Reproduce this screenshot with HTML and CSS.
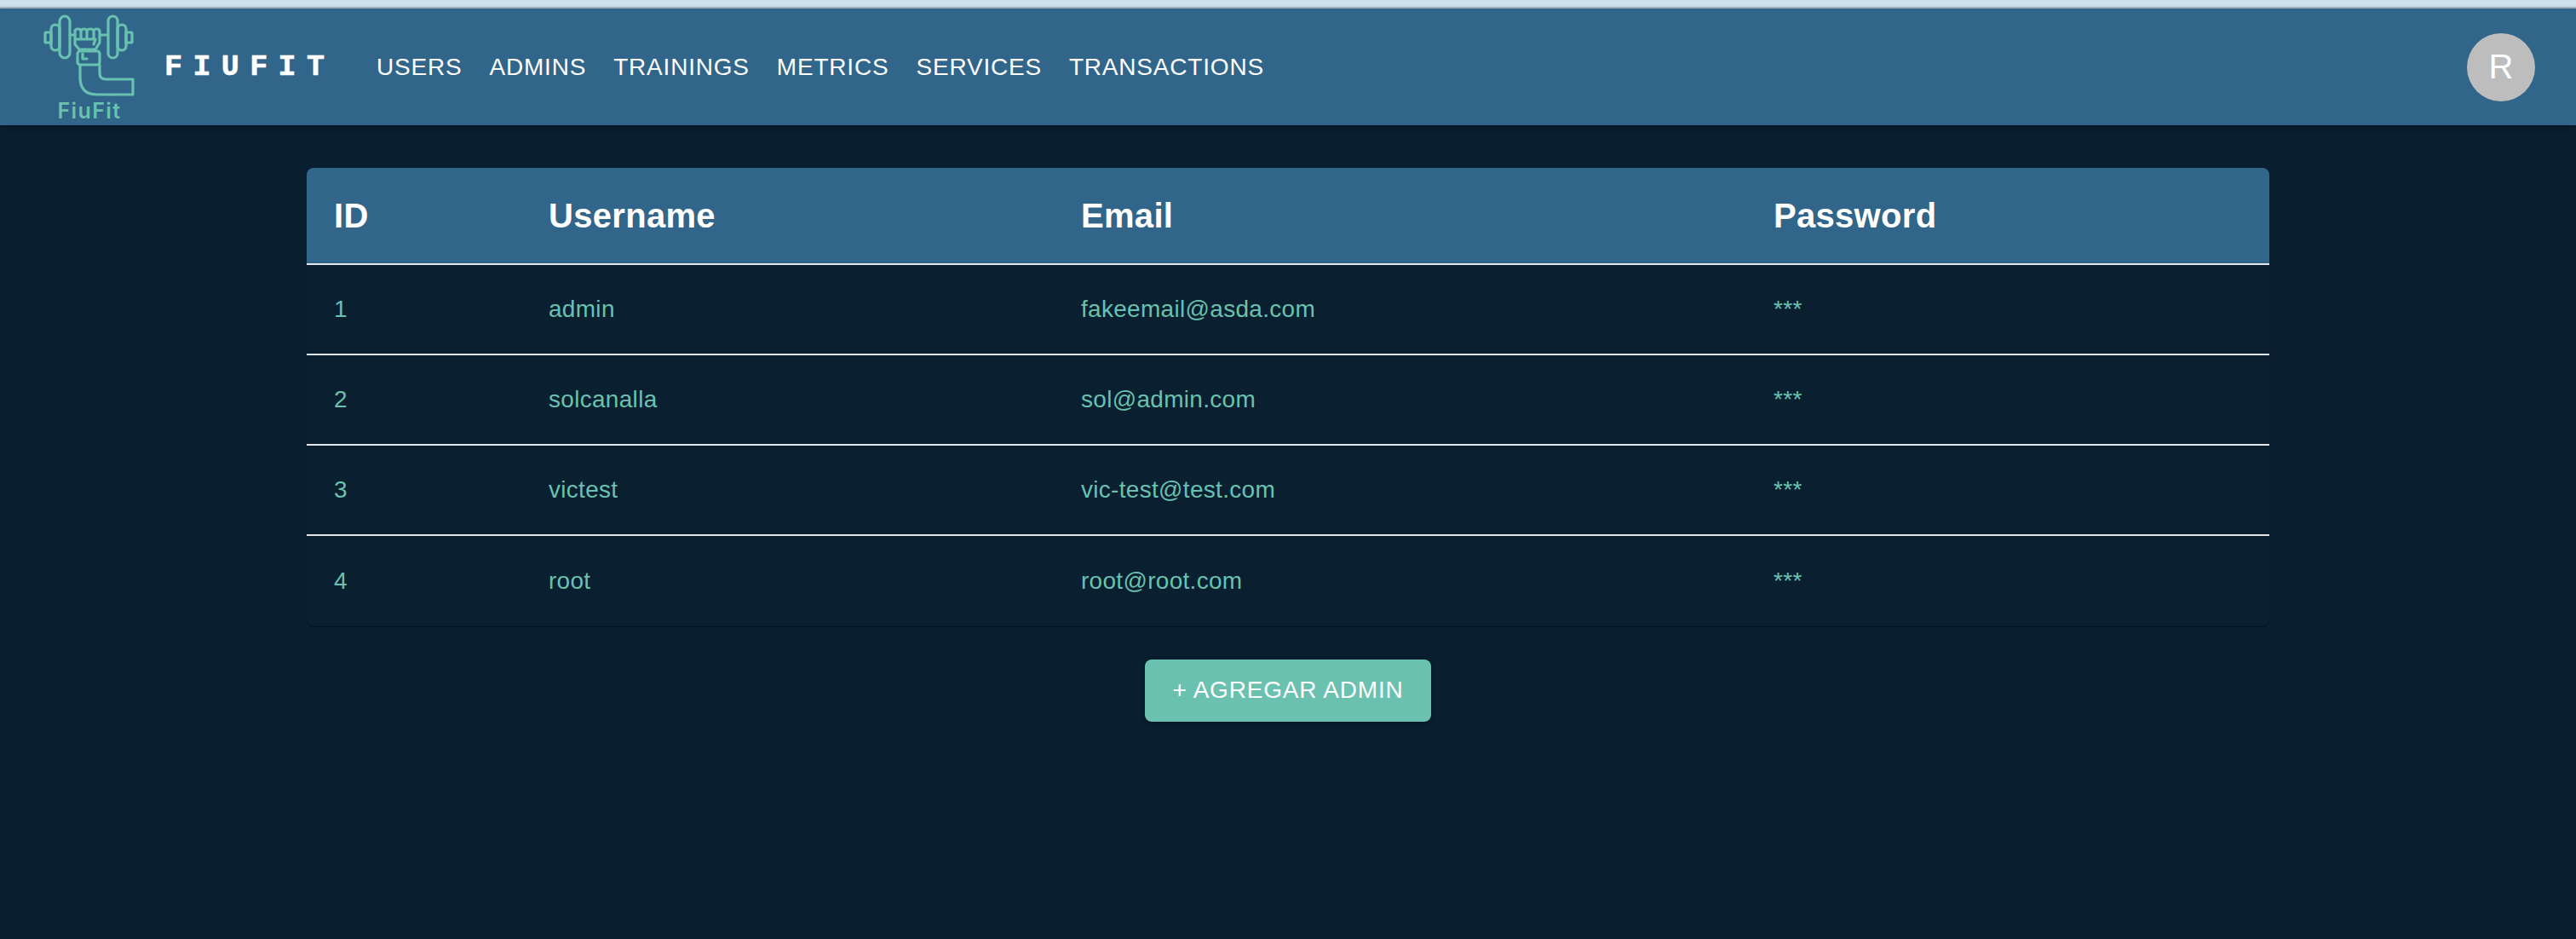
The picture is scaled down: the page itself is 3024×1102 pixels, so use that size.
FILE: index.html
```html
<!DOCTYPE html>
<html lang="en">
<head>
    <meta charset="UTF-8">
    <meta name="viewport" content="width=device-width, initial-scale=1.0">
    <title>FiuFit</title>
    <link rel="stylesheet" href="styles.css">
</head>
<body>
    <div class="top-strip"></div>

    <header class="app-bar">
        <div class="logo">
            <svg class="logo-mark" viewBox="50 16 110 100" fill="none" stroke="#69c1af" stroke-width="3.2" stroke-linejoin="round" stroke-linecap="round">
                <!-- left weights -->
                <rect x="53" y="38" width="7" height="12" rx="1"/>
                <rect x="60" y="29" width="10" height="30" rx="5"/>
                <rect x="70" y="19" width="12" height="49" rx="6"/>
                <path d="M82 41h6M118 41h8"/>
                <!-- right weights -->
                <rect x="127" y="19" width="11" height="49" rx="5.500"/>
                <rect x="138" y="29" width="10" height="30" rx="5"/>
                <rect x="148" y="38" width="7" height="12" rx="1"/>
                <!-- fist -->
                <path d="M88 46V37q0-3 3.500-3t3.500 3v9M95 37q0-3 3.500-3t3.500 3v9M102 37q0-3 4-3t4 3v9M110 37q0-3 3.500-3t3.500 3v13l-5 8H93l-5-6v-6h24l-2 6"/>
                <!-- wrist and arm -->
                <rect x="91" y="60" width="26" height="16" rx="3"/>
                <path d="M97 63v6h5"/>
                <path d="M94 76v15q0 20 20 20h42V93h-32q-7 0-7-7V76"/>
            </svg>
            <span class="logo-name">FiuFit</span>
        </div>
        <span class="brand">FIUFIT</span>
        <nav class="nav">
            <a href="#">USERS</a>
            <a href="#">ADMINS</a>
            <a href="#">TRAININGS</a>
            <a href="#">METRICS</a>
            <a href="#">SERVICES</a>
            <a href="#">TRANSACTIONS</a>
        </nav>
        <div class="avatar">R</div>
    </header>

    <main class="content">
        <div class="table-box">
            <table class="admins">
                <colgroup>
                    <col class="col-id">
                    <col class="col-user">
                    <col class="col-email">
                    <col>
                </colgroup>
                <thead>
                    <tr>
                        <th>ID</th>
                        <th>Username</th>
                        <th>Email</th>
                        <th>Password</th>
                    </tr>
                </thead>
                <tbody>
                    <tr>
                        <td>1</td>
                        <td>admin</td>
                        <td>fakeemail@asda.com</td>
                        <td>***</td>
                    </tr>
                    <tr>
                        <td>2</td>
                        <td>solcanalla</td>
                        <td>sol@admin.com</td>
                        <td>***</td>
                    </tr>
                    <tr>
                        <td>3</td>
                        <td>victest</td>
                        <td>vic-test@test.com</td>
                        <td>***</td>
                    </tr>
                    <tr>
                        <td>4</td>
                        <td>root</td>
                        <td>root@root.com</td>
                        <td>***</td>
                    </tr>
                </tbody>
            </table>
        </div>
        <button type="button" class="add-btn">+ AGREGAR ADMIN</button>
    </main>
</body>
</html>
```

FILE: styles.css
```css
html,
body {
    height: 100%;
}

body {
    margin: 0;
    overflow: hidden;
    background-color: #091e2f;
    font-family: "Liberation Sans", Arial, sans-serif;
}

.top-strip {
    height: 8px;
    background-color: #cde0ec;
    border-bottom: 2px solid #a9b9c3;
}

.app-bar {
    display: flex;
    align-items: center;
    height: 137px;
    padding: 0 48px 0 50px;
    background-color: #31658a;
    box-shadow: 0 2px 6px rgba(0, 0, 0, 0.3);
    color: #fff;
}

.logo {
    display: flex;
    flex-direction: column;
    align-items: center;
    width: 110px;
    margin-right: 33px;
    padding-top: 2px;
}

.logo-mark {
    display: block;
    width: 110px;
    height: 100px;
}

.logo-name {
    margin-top: 1px;
    font-family: Inter, sans-serif;
    font-size: 25px;
    font-weight: 600;
    letter-spacing: 1.4px;
    line-height: 26px;
    color: #69c1af;
}

.brand {
    width: 249px;
    font-family: "Liberation Mono", monospace;
    font-size: 35px;
    font-weight: 700;
    letter-spacing: 12.4px;
    -webkit-text-stroke: 0.6px #fff;
}

.nav {
    display: flex;
    gap: 32px;
    flex: 1;
}

.nav a {
    font-size: 28px;
    letter-spacing: 0.8px;
    color: #fff;
    text-decoration: none;
}

.avatar {
    display: flex;
    align-items: center;
    justify-content: center;
    width: 80px;
    height: 80px;
    border-radius: 50%;
    background-color: #bdbdbd;
    font-size: 40px;
    color: #fff;
}

.content {
    display: flex;
    flex-direction: column;
    align-items: center;
    padding-top: 50px;
}

.table-box {
    width: 2304px;
    border-radius: 8px;
    overflow: hidden;
    box-shadow: 0 1px 1px rgba(0, 0, 0, 0.4);
    background-color: #0a1f30;
}

.admins {
    width: 100%;
    table-layout: fixed;
    border-collapse: collapse;
}

.col-id {
    width: 252px;
}

.col-user {
    width: 625px;
}

.col-email {
    width: 813px;
}

.admins th {
    height: 112px;
    padding: 0 32px;
    background-color: #31658a;
    border-bottom: 2px solid #e3e6e8;
    font-size: 40px;
    font-weight: 700;
    letter-spacing: 0.3px;
    text-align: left;
    color: #fff;
}

.admins td {
    height: 104px;
    padding: 0 32px;
    border-bottom: 2px solid #e3e6e8;
    font-size: 28px;
    letter-spacing: 0.3px;
    color: #69c1af;
}

.admins tbody tr:last-child td {
    border-bottom: none;
    height: 106px;
}

.add-btn {
    width: 336px;
    height: 73px;
    margin-top: 39px;
    padding: 0 0 2px;
    border: none;
    border-radius: 8px;
    background-color: #6ac1af;
    box-shadow: 0 2px 4px rgba(0, 0, 0, 0.25);
    font-family: inherit;
    font-size: 28px;
    letter-spacing: 0.8px;
    color: #fff;
    cursor: pointer;
}
```
